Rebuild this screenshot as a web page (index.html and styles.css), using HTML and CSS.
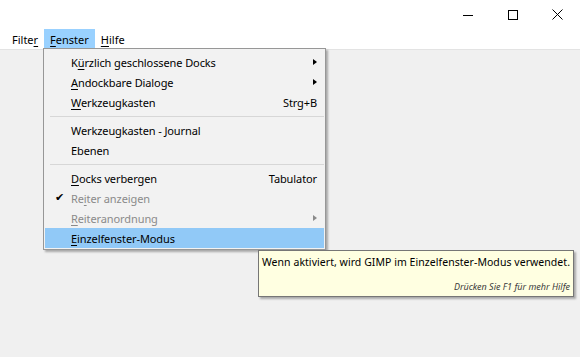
FILE: index.html
```html
<!DOCTYPE html>
<html lang="de">
<head>
<meta charset="utf-8">
<title>GIMP Fenster-Menü</title>
<link rel="stylesheet" href="styles.css">
</head>
<body>
<div class="window">
  <div class="titlebar">
    <div class="caption-btn" aria-label="Minimieren">
      <svg width="10" height="10" viewBox="0 0 10 10"><path d="M0 5.5H10" stroke="#000" stroke-width="1" fill="none"/></svg>
    </div>
    <div class="caption-btn" aria-label="Maximieren">
      <svg width="10" height="10" viewBox="0 0 10 10"><rect x="0.5" y="0.5" width="9" height="9" stroke="#000" stroke-width="1" fill="none"/></svg>
    </div>
    <div class="caption-btn" aria-label="Schließen">
      <svg width="11" height="11" viewBox="0 0 11 11"><path d="M0.5 0.5L10.5 10.5M10.5 0.5L0.5 10.5" stroke="#000" stroke-width="1" fill="none"/></svg>
    </div>
  </div>
  <div class="menubar">
    <span class="mb-item">Filte<u>r</u></span>
    <span class="mb-item active"><u>F</u>enster</span>
    <span class="mb-item"><u>H</u>ilfe</span>
  </div>
  <div class="workspace"></div>

  <div class="dropdown">
    <div class="row"><span class="label">K<u>ü</u>rzlich geschlossene Docks</span><span class="arrow"></span></div>
    <div class="row"><span class="label"><u>A</u>ndockbare Dialoge</span><span class="arrow"></span></div>
    <div class="row"><span class="label"><u>W</u>erkzeugkasten</span><span class="shortcut">Strg+B</span></div>
    <div class="sep"></div>
    <div class="row"><span class="label">Werkzeugkasten - Journal</span></div>
    <div class="row"><span class="label">Ebenen</span></div>
    <div class="sep"></div>
    <div class="row"><span class="label"><u>D</u>ocks verbergen</span><span class="shortcut">Tabulator</span></div>
    <div class="row disabled"><span class="check">✔</span><span class="label">Re<u>i</u>ter anzeigen</span></div>
    <div class="row disabled"><span class="label"><u>R</u>eiteranordnung</span><span class="arrow"></span></div>
    <div class="row selected"><span class="label"><u>E</u>inzelfenster-Modus</span></div>
  </div>

  <div class="tooltip">
    <div class="tip-main">Wenn aktiviert, wird GIMP im Einzelfenster-Modus verwendet.</div>
    <div class="tip-help">Drücken Sie F1 für mehr Hilfe</div>
  </div>
</div>
</body>
</html>
```

FILE: styles.css
```css
html, body {
  margin: 0;
  padding: 0;
}
body {
  font-family: "Noto Sans", "Open Sans", sans-serif;
  font-size: 11px;
  color: #000;
  background: #f0f0f0;
}
.window {
  position: relative;
  width: 580px;
  height: 357px;
  display: flex;
  flex-direction: column;
  background: #f0f0f0;
  overflow: hidden;
}
.titlebar {
  height: 29px;
  background: #fff;
  display: flex;
  justify-content: flex-end;
}
.caption-btn {
  width: 45px;
  height: 29px;
  display: flex;
  align-items: center;
  justify-content: center;
}
.caption-btn svg {
  display: block;
}
.menubar {
  height: 20px;
  background: #fff;
  display: flex;
  align-items: stretch;
  padding-left: 6px;
  border-bottom: 1px solid #e3e3e3;
}
.mb-item {
  display: flex;
  align-items: center;
  padding: 1px 6px 0 6px;
  line-height: 20px;
}
.mb-item.active {
  background: #99d1ff;
}
.workspace {
  flex: 1;
  background: #f0f0f0;
}
u {
  text-decoration: underline;
  text-underline-offset: 2px;
}
.dropdown {
  position: absolute;
  left: 43px;
  top: 48px;
  width: 283px;
  box-sizing: border-box;
  background: #f2f2f2;
  border: 1px solid #979797;
  padding: 3px 1px 1px 1px;
  box-shadow: 2px 2px 2px rgba(0, 0, 0, 0.3);
}
.row {
  position: relative;
  height: 20px;
  display: flex;
  align-items: center;
  padding: 0 7px 0 26px;
  letter-spacing: -0.1px;
}
.row .label {
  flex: 1;
  white-space: nowrap;
}
.row .shortcut {
  white-space: nowrap;
}
.row .arrow {
  width: 0;
  height: 0;
  border-top: 3.5px solid transparent;
  border-bottom: 3.5px solid transparent;
  border-left: 4px solid #000;
  margin-right: 0px;
}
.row.disabled {
  color: #8a8a8a;
}
.row.disabled .arrow {
  border-left-color: #8a8a8a;
}
.row .check {
  position: absolute;
  left: 10px;
  top: 0;
  line-height: 20px;
  font-size: 11px;
  color: #000;
  font-family: "DejaVu Sans", sans-serif;
}
.row.selected {
  background: #91c9f7;
}
.sep {
  height: 8px;
  display: flex;
  align-items: center;
  padding-left: 5px;
}
.sep::before {
  content: "";
  display: block;
  flex: 1;
  border-top: 1px solid #d7d7d7;
}
.tooltip {
  position: absolute;
  left: 258px;
  top: 250px;
  width: 316px;
  height: 47px;
  box-sizing: border-box;
  background: #ffffe1;
  border: 1px solid #767676;
  box-shadow: 2px 2px 2px rgba(0, 0, 0, 0.3);
  display: flex;
  flex-direction: column;
  justify-content: space-between;
  padding: 3px 3px 2px 3px;
}
.tip-main {
  white-space: nowrap;
  line-height: 16px;
  font-size: 10.5px;
  letter-spacing: 0.05px;
}
.tip-help {
  text-align: right;
  font-style: italic;
  font-size: 9px;
  color: #3c3c3c;
  line-height: 14px;
  white-space: nowrap;
}
```
